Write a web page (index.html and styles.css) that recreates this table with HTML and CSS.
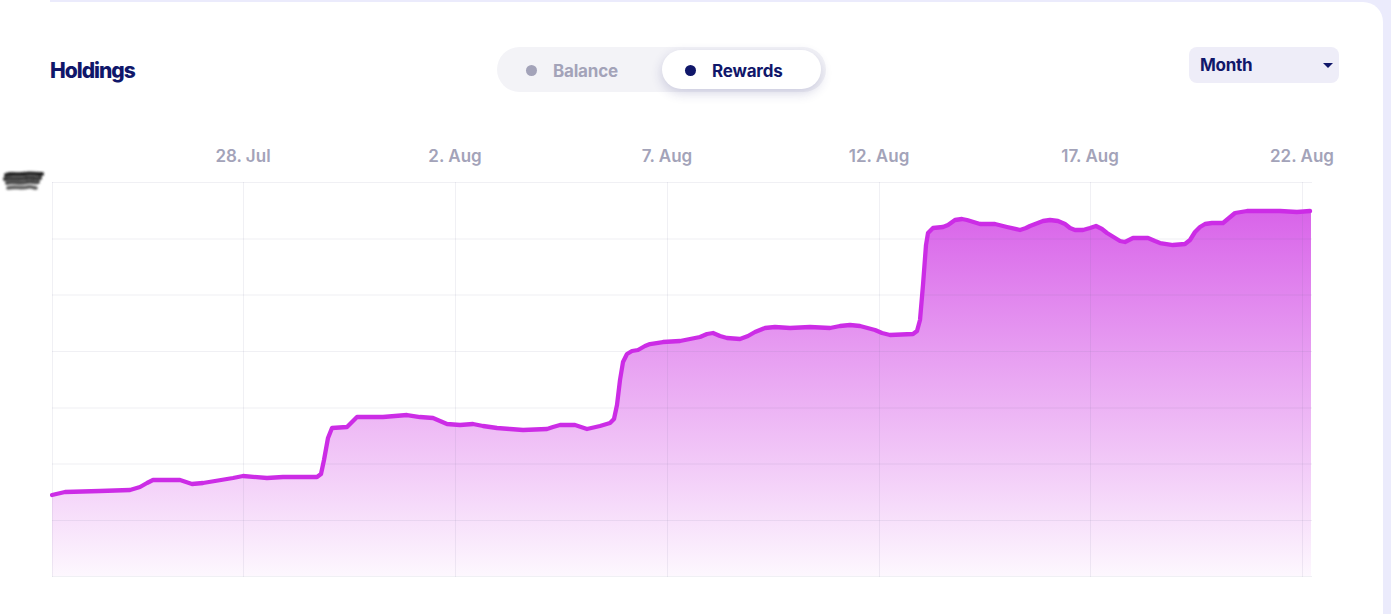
FILE: index.html
```html
<!DOCTYPE html>
<html lang="en">
<head>
<meta charset="utf-8">
<title>Holdings</title>
<link rel="stylesheet" href="styles.css">
</head>
<body>
<div class="page">
  <aside class="gutter">
    <svg class="ylabel" width="48" height="26" viewBox="0 0 48 26" aria-hidden="true">
      <defs><filter id="blur" x="-20%" y="-50%" width="140%" height="200%"><feGaussianBlur stdDeviation="1.2"/></filter></defs>
      <g filter="url(#blur)" fill="none" stroke-linecap="round">
        <path d="M6 6 C11 4 17 6 23 5 C29 4 35 5 42 5" stroke="#222" stroke-width="4"/>
        <path d="M5 10 C10 8 18 11 26 9 C31 8 36 10 40 9" stroke="#3a3a3a" stroke-width="4.2"/>
        <path d="M7 14 C12 12 20 15 27 13 C32 12 35 14 38 13" stroke="#4c4c4c" stroke-width="4"/>
        <path d="M8 19 C14 17 22 20 28 18 C31 17 34 19 36 19" stroke="#5e5e5e" stroke-width="3.6"/>
      </g>
    </svg>
  </aside>
  <main class="panel">
    <section class="card">
      <header class="card-head">
        <h2 class="title">Holdings</h2>
        <div class="toggle">
          <button class="seg"><span class="dot"></span>Balance</button>
          <button class="seg active"><span class="dot"></span>Rewards</button>
        </div>
        <div class="select">Month<span class="caret"></span></div>
      </header>
      <svg class="chart" width="1333" height="480" viewBox="50 130 1333 480">
        <defs>
          <linearGradient id="fillGrad" gradientUnits="userSpaceOnUse" x1="0" y1="182" x2="0" y2="576">
            <stop offset="0" stop-color="#cf3de4" stop-opacity="0.86"/>
            <stop offset="1" stop-color="#cf3de4" stop-opacity="0.04"/>
          </linearGradient>
        </defs>
        <g class="labels">
          <text x="243" y="162">28. Jul</text>
          <text x="455" y="162">2. Aug</text>
          <text x="667" y="162">7. Aug</text>
          <text x="879" y="162">12. Aug</text>
          <text x="1090" y="162">17. Aug</text>
          <text x="1302" y="162">22. Aug</text>
        </g>
        <path class="area" d="M52,495 L65,492 100,491 130,490 140,487 147,483 153,480 180,480 186,482 192,484 203,483 233,478 243,476 267,478 283,477 317,477 321,474 324,460 328,438 332,428 347,427 351,423 357,417 383,417 407,415 420,417 433,418 440,421 447,424 460,425 473,424 483,426 497,428 510,429 523,430 547,429 553,427 560,425 575,425 581,427 587,429 600,426 610,423 614,419 617,405 620,380 623,362 627,354 632,351 638,350 645,346 650,344 663,342 680,341 700,337 707,334 713,333 720,336 727,338 740,339 748,336 755,332 765,328 775,327 790,328 810,327 830,328 840,326 850,325 860,326 875,330 882,333 890,335 913,334 917,331 920,320 923,285 926,245 928,233 933,228 943,227 948,225 955,220 962,219 967,220 980,224 995,224 1007,227 1020,230 1026,228 1030,226 1043,221 1050,220 1058,221 1065,224 1070,228 1075,230 1083,230 1090,228 1096,226 1102,229 1107,233 1120,241 1125,242 1133,238 1148,238 1155,241 1160,243 1173,245 1185,244 1190,240 1195,232 1200,227 1205,224 1212,223 1223,223 1229,218 1235,213 1247,211 1280,211 1297,212 1311,211 L1311,576 L52,576 Z"/>
        <g class="grid">
          <path d="M52,182.5 H1312 M52,239 H1312 M52,295 H1312 M52,351.5 H1312 M52,408 H1312 M52,464 H1312 M52,520.5 H1312 M52,576.5 H1312"/>
          <path d="M52.5,182 V577 M243.5,182 V577 M455.5,182 V577 M667.5,182 V577 M879.5,182 V577 M1090.5,182 V577 M1302.5,182 V577"/>
        </g>
        <path class="line" d="M52,495 L65,492 100,491 130,490 140,487 147,483 153,480 180,480 186,482 192,484 203,483 233,478 243,476 267,478 283,477 317,477 321,474 324,460 328,438 332,428 347,427 351,423 357,417 383,417 407,415 420,417 433,418 440,421 447,424 460,425 473,424 483,426 497,428 510,429 523,430 547,429 553,427 560,425 575,425 581,427 587,429 600,426 610,423 614,419 617,405 620,380 623,362 627,354 632,351 638,350 645,346 650,344 663,342 680,341 700,337 707,334 713,333 720,336 727,338 740,339 748,336 755,332 765,328 775,327 790,328 810,327 830,328 840,326 850,325 860,326 875,330 882,333 890,335 913,334 917,331 920,320 923,285 926,245 928,233 933,228 943,227 948,225 955,220 962,219 967,220 980,224 995,224 1007,227 1020,230 1026,228 1030,226 1043,221 1050,220 1058,221 1065,224 1070,228 1075,230 1083,230 1090,228 1096,226 1102,229 1107,233 1120,241 1125,242 1133,238 1148,238 1155,241 1160,243 1173,245 1185,244 1190,240 1195,232 1200,227 1205,224 1212,223 1223,223 1229,218 1235,213 1247,211 1280,211 1297,212 1310,211"/>
      </svg>
    </section>
  </main>
</div>
</body>
</html>
```

FILE: styles.css
```css
* { box-sizing: border-box; }

html, body {
  margin: 0;
  padding: 0;
  background: #ffffff;
  font-family: "Inter", "Lato", "Liberation Sans", sans-serif;
}

.page {
  display: flex;
  height: 614px;
  overflow: hidden;
}

.gutter {
  width: 50px;
  flex: none;
  padding: 169px 0 0 0;
  background: #ffffff;
}

.ylabel { display: block; }

.panel {
  flex: 1;
  background: #ebebfc;
  padding: 2px 8px 0 0;
}

.card {
  background: #ffffff;
  border-radius: 0 20px 20px 0;
  height: 640px;
  overflow: hidden;
}

.card-head {
  display: grid;
  grid-template-columns: 447px 329px 1fr;
  padding-top: 45px;
  height: 90px;
  align-items: start;
}

.title {
  margin: 0;
  height: 46px;
  display: flex;
  align-items: center;
  font-size: 21px;
  font-weight: 800;
  letter-spacing: -1px;
  color: #10176a;
}

.toggle {
  display: flex;
  gap: 3px;
  width: 329px;
  height: 45px;
  padding: 3px;
  border-radius: 23px;
  background: #f3f3f7;
}

.seg {
  display: flex;
  align-items: center;
  gap: 16px;
  width: 159px;
  height: 39px;
  padding: 2px 0 0 26px;
  border: 0;
  border-radius: 20px;
  background: transparent;
  font-family: inherit;
  font-size: 17px;
  font-weight: 700;
  letter-spacing: -0.2px;
  color: #a3a3b9;
  cursor: pointer;
}

.seg .dot {
  width: 11px;
  height: 11px;
  border-radius: 50%;
  background: currentColor;
  flex: none;
}

.seg.active {
  background: #ffffff;
  color: #10176a;
  padding-left: 23px;
  box-shadow: 0 4px 12px rgba(40, 40, 120, 0.2);
}

.select {
  justify-self: end;
  margin: 0 44px 0 0;
  width: 150px;
  height: 36px;
  display: flex;
  align-items: center;
  justify-content: space-between;
  padding: 0 6px 0 11px;
  border-radius: 8px;
  background: #eeedf8;
  font-size: 17px;
  font-weight: 700;
  letter-spacing: -0.3px;
  color: #10176a;
}

.caret {
  width: 0;
  height: 0;
  border-left: 5.5px solid transparent;
  border-right: 5.5px solid transparent;
  border-top: 5px solid #10176a;
}

.chart {
  display: block;
  margin-top: 38px;
}

.labels text {
  font-family: "Inter", "Lato", "Liberation Sans", sans-serif;
  font-size: 17px;
  font-weight: 600;
  letter-spacing: 0;
  fill: #a3a3b9;
  text-anchor: middle;
}

.area { fill: url(#fillGrad); }

.grid path {
  fill: none;
  stroke: rgba(110, 110, 150, 0.1);
  stroke-width: 1;
}

.line {
  fill: none;
  stroke: #cc2ce6;
  stroke-width: 4.3;
  stroke-linejoin: round;
  stroke-linecap: round;
}
```
